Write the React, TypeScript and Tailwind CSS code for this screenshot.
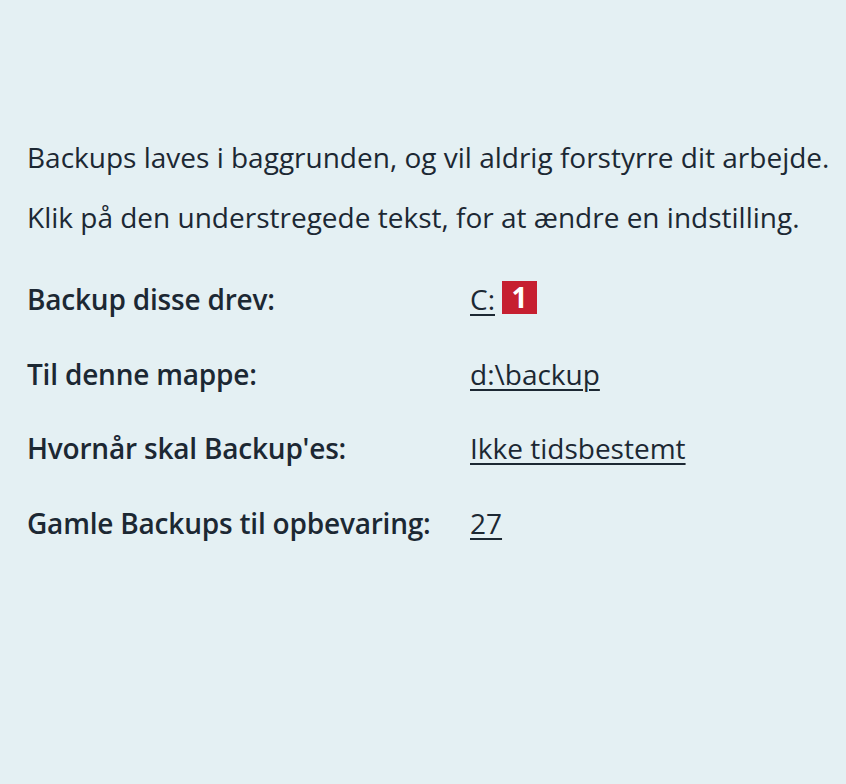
import React from "react";

const rows: { label: string; value: string; badge?: string }[] = [
  { label: "Backup disse drev:", value: "C:", badge: "1" },
  { label: "Til denne mappe:", value: "d:\\backup" },
  { label: "Hvornår skal Backup'es:", value: "Ikke tidsbestemt" },
  { label: "Gamle Backups til opbevaring:", value: "27" },
];

export default function App() {
  return (
    <div
      className="w-[846px] h-[784px] bg-[#e4f0f3] text-[#1c2833] pl-[27px] pt-[127px] text-[28px]"
      style={{ fontFamily: '"Open Sans", "Noto Sans", sans-serif' }}
    >
      <div className="flex flex-col leading-[60px]">
        <p>Backups laves i baggrunden, og vil aldrig forstyrre dit arbejde.</p>
        <p>Klik på den understregede tekst, for at ændre en indstilling.</p>
      </div>
      <div className="mt-[15px] flex flex-col leading-[74.5px]">
        {rows.map((r) => (
          <div key={r.label} className="flex items-center h-[74.5px]">
            <div className="w-[443px] font-semibold tracking-[-0.2px]">{r.label}</div>
            <div className="flex items-center gap-[7px]">
              <span className="underline underline-offset-[4px] decoration-[2px]">{r.value}</span>
              {r.badge && (
                <span className="w-[35px] h-[33px] mb-[3px] bg-[#c61f30] text-white font-bold text-[28px] leading-[33px] flex items-center justify-center">
                  {r.badge}
                </span>
              )}
            </div>
          </div>
        ))}
      </div>
    </div>
  );
}
